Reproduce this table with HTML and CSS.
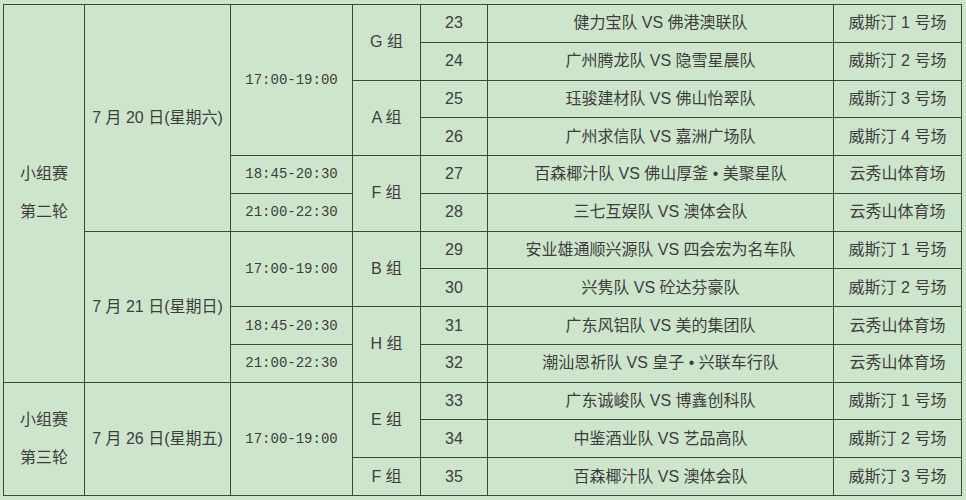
FILE: index.html
```html
<!DOCTYPE html>
<html>
<head>
<meta charset="utf-8">
<link rel="stylesheet" href="styles.css">
</head>
<body>
<table class="sched">
<colgroup>
<col class="c1"><col class="c2"><col class="c3"><col class="c4"><col class="c5"><col class="c6"><col class="c7">
</colgroup>
<tr>
<td rowspan="10" class="stage">小组赛<br>第二轮</td>
<td rowspan="6">7 月 20 日(星期六)</td>
<td rowspan="4" class="time">17:00-19:00</td>
<td rowspan="2">G 组</td>
<td>23</td><td>健力宝队 VS 佛港澳联队</td><td>威斯汀 1 号场</td>
</tr>
<tr><td>24</td><td>广州腾龙队 VS 隐雪星晨队</td><td>威斯汀 2 号场</td></tr>
<tr><td rowspan="2">A 组</td><td>25</td><td>珏骏建材队 VS 佛山怡翠队</td><td>威斯汀 3 号场</td></tr>
<tr><td>26</td><td>广州求信队 VS 嘉洲广场队</td><td>威斯汀 4 号场</td></tr>
<tr><td class="time">18:45-20:30</td><td rowspan="2">F 组</td><td>27</td><td>百森椰汁队 VS 佛山厚釜 • 美聚星队</td><td>云秀山体育场</td></tr>
<tr><td class="time">21:00-22:30</td><td>28</td><td>三七互娱队 VS 澳体会队</td><td>云秀山体育场</td></tr>
<tr><td rowspan="4">7 月 21 日(星期日)</td><td rowspan="2" class="time">17:00-19:00</td><td rowspan="2">B 组</td><td>29</td><td>安业雄通顺兴源队 VS 四会宏为名车队</td><td>威斯汀 1 号场</td></tr>
<tr><td>30</td><td>兴隽队 VS 砼达芬豪队</td><td>威斯汀 2 号场</td></tr>
<tr><td class="time">18:45-20:30</td><td rowspan="2">H 组</td><td>31</td><td>广东风铝队 VS 美的集团队</td><td>云秀山体育场</td></tr>
<tr><td class="time">21:00-22:30</td><td>32</td><td>潮汕恩祈队 VS 皇子 • 兴联车行队</td><td>云秀山体育场</td></tr>
<tr><td rowspan="3" class="stage">小组赛<br>第三轮</td><td rowspan="3">7 月 26 日(星期五)</td><td rowspan="3" class="time">17:00-19:00</td><td rowspan="2">E 组</td><td>33</td><td>广东诚峻队 VS 博鑫创科队</td><td>威斯汀 1 号场</td></tr>
<tr><td>34</td><td>中鉴酒业队 VS 艺品高队</td><td>威斯汀 2 号场</td></tr>
<tr><td>F 组</td><td>35</td><td>百森椰汁队 VS 澳体会队</td><td>威斯汀 3 号场</td></tr>
</table>
</body>
</html>
```
FILE: styles.css
```css
html, body {
  background: #cde6cb;
}
body {
  margin: 4px 0 0 3px;
  font-family: "Liberation Sans", "Noto Sans CJK SC", sans-serif;
  font-size: 16px;
  color: #3d3d3d;
}
.sched {
  border-collapse: collapse;
  table-layout: fixed;
  width: 959px;
}
.sched td {
  border: 1.5px solid #3a473a;
  height: 36.77px;
  padding: 0;
  text-align: center;
  vertical-align: middle;
  white-space: nowrap;
  line-height: 20px;
}
.c1 { width: 81px; }
.c2 { width: 146px; }
.c3 { width: 122px; }
.c4 { width: 68px; }
.c5 { width: 67px; }
.c6 { width: 346px; }
.c7 { width: 128px; }
.sched td.stage {
  line-height: 38px;
}
.sched td.time {
  font-family: "Liberation Mono", monospace;
  font-size: 14px;
}
```
